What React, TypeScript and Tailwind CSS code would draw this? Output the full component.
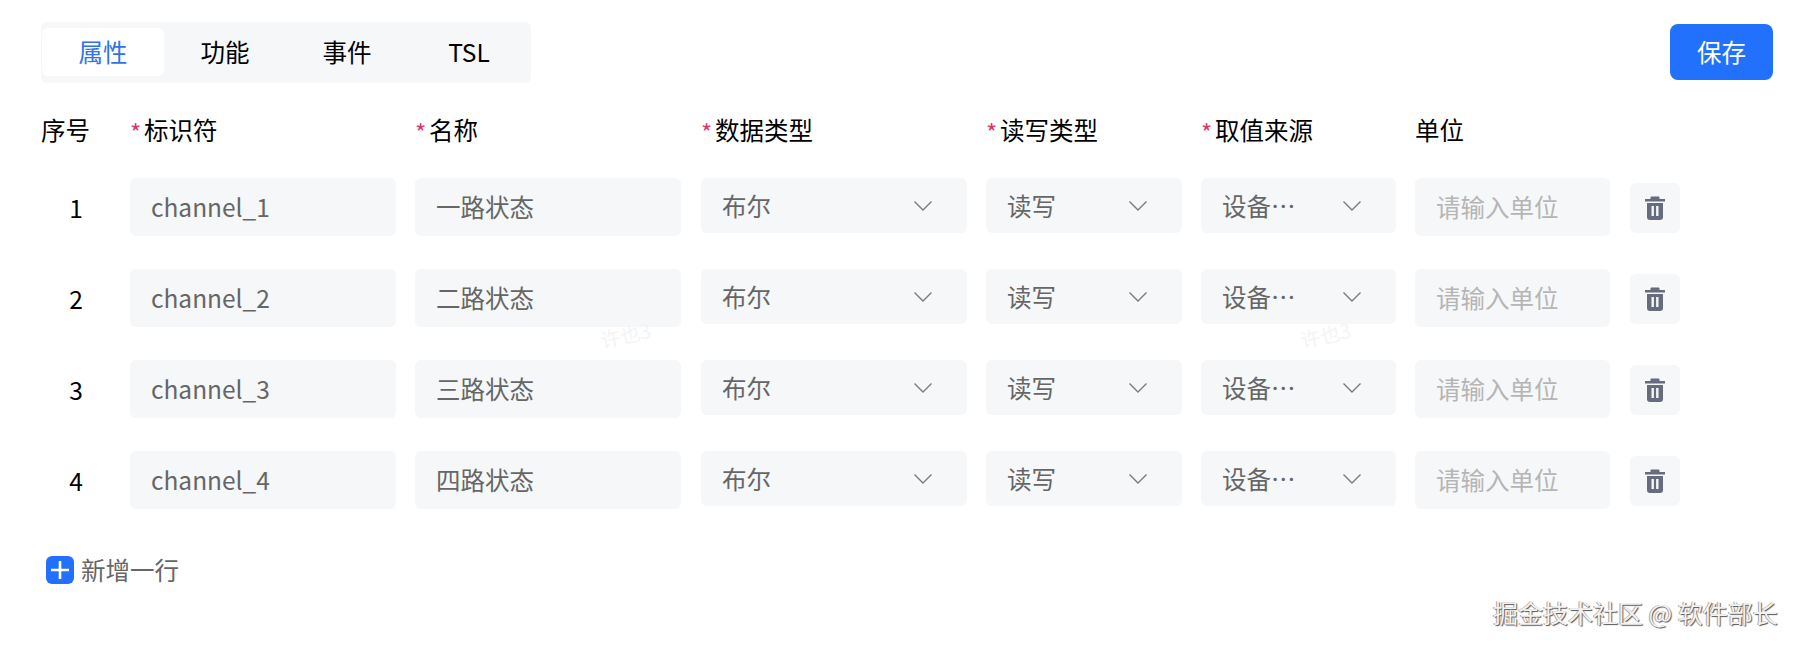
const cols = ["w-[285px]", "w-[286px]", "w-[285px]", "w-[215px]", "w-[214px]", "w-[215px]"];
const headers = [
  { t: "标识符", r: true },
  { t: "名称", r: true },
  { t: "数据类型", r: true },
  { t: "读写类型", r: true },
  { t: "取值来源", r: true },
  { t: "单位", r: false },
];
const rows = [
  ["channel_1", "一路状态"],
  ["channel_2", "二路状态"],
  ["channel_3", "三路状态"],
  ["channel_4", "四路状态"],
];

function Chevron() {
  return (
    <svg width="20" height="12" viewBox="0 0 20 12" fill="none" stroke="#7a7a7a" strokeWidth="1.4">
      <path d="M1.5 1.5 L10 10 L18.5 1.5" />
    </svg>
  );
}

function Trash() {
  return (
    <svg width="20" height="24" viewBox="0 0 20 24" fill="#666b7d">
      <path d="M6.5 0.5h7a1 1 0 0 1 1 1V3H20v2.6H0V3h5.5V1.5a1 1 0 0 1 1-1z" />
      <path fillRule="evenodd" d="M2 7h16v14a3 3 0 0 1-3 3H5a3 3 0 0 1-3-3V7zm4.500 3v10h2.400V10H6.500zm4.600 0v10h2.400V10h-2.400z" />
    </svg>
  );
}

function Field({ value, placeholder, width }: { value?: string; placeholder?: string; width: string }) {
  return (
    <input
      readOnly
      value={value ?? ""}
      placeholder={placeholder}
      className={`${width} h-[58px] rounded-md bg-[#f5f7f9] px-[21px] pb-[2px] text-[24.5px] text-[#666666] outline-none placeholder:text-[#b5b5b5]`}
    />
  );
}

function Select({ value, width, ellipsis }: { value: string; width: string; ellipsis?: boolean }) {
  return (
    <div className={`${width} flex h-[55px] items-center justify-between rounded-md bg-[#f5f7f9] pl-[21px] pr-[34px] text-[24.5px] text-[#666666]`}>
      <span className="pt-[2px]">{ellipsis ? "设备…" : value}</span>
      <Chevron />
    </div>
  );
}

export default function App() {
  return (
    <div
      className="relative h-[647px] w-[1798px] overflow-hidden bg-white pl-[41px] pr-[25px] pt-[22px] text-[24.5px] text-black"
      style={{ fontFamily: '"Noto Sans CJK SC", "Noto Sans", sans-serif' }}
    >
      <div className="flex items-start justify-between">
        <div className="flex h-[61px] w-[490px] rounded-md bg-[#f5f7f9] pl-[1px] pt-[6px]">
          <div className="flex h-[48px] w-[122px] items-center justify-center rounded-md bg-white text-[#2f74e6]">属性</div>
          <div className="flex h-[48px] w-[122px] items-center justify-center">功能</div>
          <div className="flex h-[48px] w-[122px] items-center justify-center">事件</div>
          <div className="flex h-[48px] w-[122px] items-center justify-center">TSL</div>
        </div>
        <button className="mt-[2px] flex h-[56px] w-[103px] items-center justify-center rounded-lg bg-[#2271fd] text-white">保存</button>
      </div>

      <div className="mt-[29px] flex h-[36px] items-center">
        <div className="w-[89px]">序号</div>
        {headers.map((h, i) => (
          <div key={h.t} className={`${cols[i]} flex items-center`}>
            {h.r && <span className="w-[14px] pt-[3px] text-[24px] leading-none text-[#d9386a]">*</span>}
            <span>{h.t}</span>
          </div>
        ))}
      </div>

      <div className="mt-[30px]">
        {rows.map((r, i) => (
          <div key={r[0]} className="flex h-[91px] items-start">
            <div className="flex h-[58px] w-[89px] items-center pl-[28px] pt-[2px]">
              <span className="w-[14px] text-center">{i + 1}</span>
            </div>
            <div className="w-[285px]"><Field value={r[0]} width="w-[266px]" /></div>
            <div className="w-[286px]"><Field value={r[1]} width="w-[266px]" /></div>
            <div className="w-[285px]"><Select value="布尔" width="w-[266px]" /></div>
            <div className="w-[215px]"><Select value="读写" width="w-[196px]" /></div>
            <div className="w-[214px]"><Select value="设备" ellipsis width="w-[195px]" /></div>
            <div className="w-[215px]"><Field placeholder="请输入单位" width="w-[195px]" /></div>
            <div className="mt-[5px] flex h-[50px] w-[50px] items-center justify-center rounded-md bg-[#f5f7f9]"><Trash /></div>
          </div>
        ))}
      </div>

      <div className="ml-[5px] mt-[10px] flex items-center gap-[7px] text-[#666666]">
        <div className="flex h-[28px] w-[28px] items-center justify-center rounded-md bg-[#2271fd]">
          <svg width="20" height="20" viewBox="0 0 20 20" stroke="white" strokeWidth="2.600">
            <path d="M10 1v18M1 10h18" />
          </svg>
        </div>
        <span>新增一行</span>
      </div>

      <div className="absolute left-[600px] top-[320px] -rotate-12 text-[20px] text-[#f4f4f4]">许也3</div>
      <div className="absolute left-[1300px] top-[320px] -rotate-12 text-[20px] text-[#f4f4f4]">许也3</div>
      <div className="absolute left-[1493px] top-[594px] text-[25px] text-[#f2f2f2] [text-shadow:1px_1px_1px_#555,-1px_0_0_#aaa]">掘金技术社区 @ 软件部长</div>
    </div>
  );
}
